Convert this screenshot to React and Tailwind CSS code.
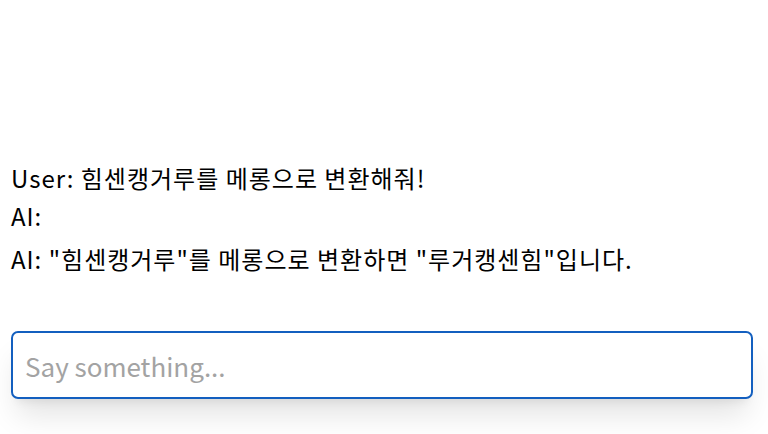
export default function App() {
  const font = { fontFamily: '"Noto Sans CJK KR", "Noto Sans", sans-serif' };
  return (
    <div className="w-full h-[434px] bg-white overflow-hidden flex flex-col" style={font}>
      <div className="flex flex-col px-[11px] pt-[159px] text-[24px] tracking-[1px] leading-[38px] text-black">
        <div className="whitespace-pre-wrap">User: 힘센캥거루를 메롱으로 변환해줘!</div>
        <div className="whitespace-pre-wrap">AI: </div>
        <div className="whitespace-pre-wrap mt-[5px]">AI: "힘센캥거루"를 메롱으로 변환하면 "루거캥센힘"입니다.</div>
      </div>
      <div className="pl-[11px] pr-[15px] mt-[53px]">
        <input
          className="w-full h-[68px] rounded-[7px] border-2 border-[#135fbf] px-[12px] text-[26px] text-black placeholder:text-[#a3a3a3] outline-none shadow-[0_22px_30px_-6px_rgba(0,0,0,0.11),0_8px_10px_-6px_rgba(0,0,0,0.08)]"
          style={font}
          placeholder="Say something..."
        />
      </div>
    </div>
  );
}
